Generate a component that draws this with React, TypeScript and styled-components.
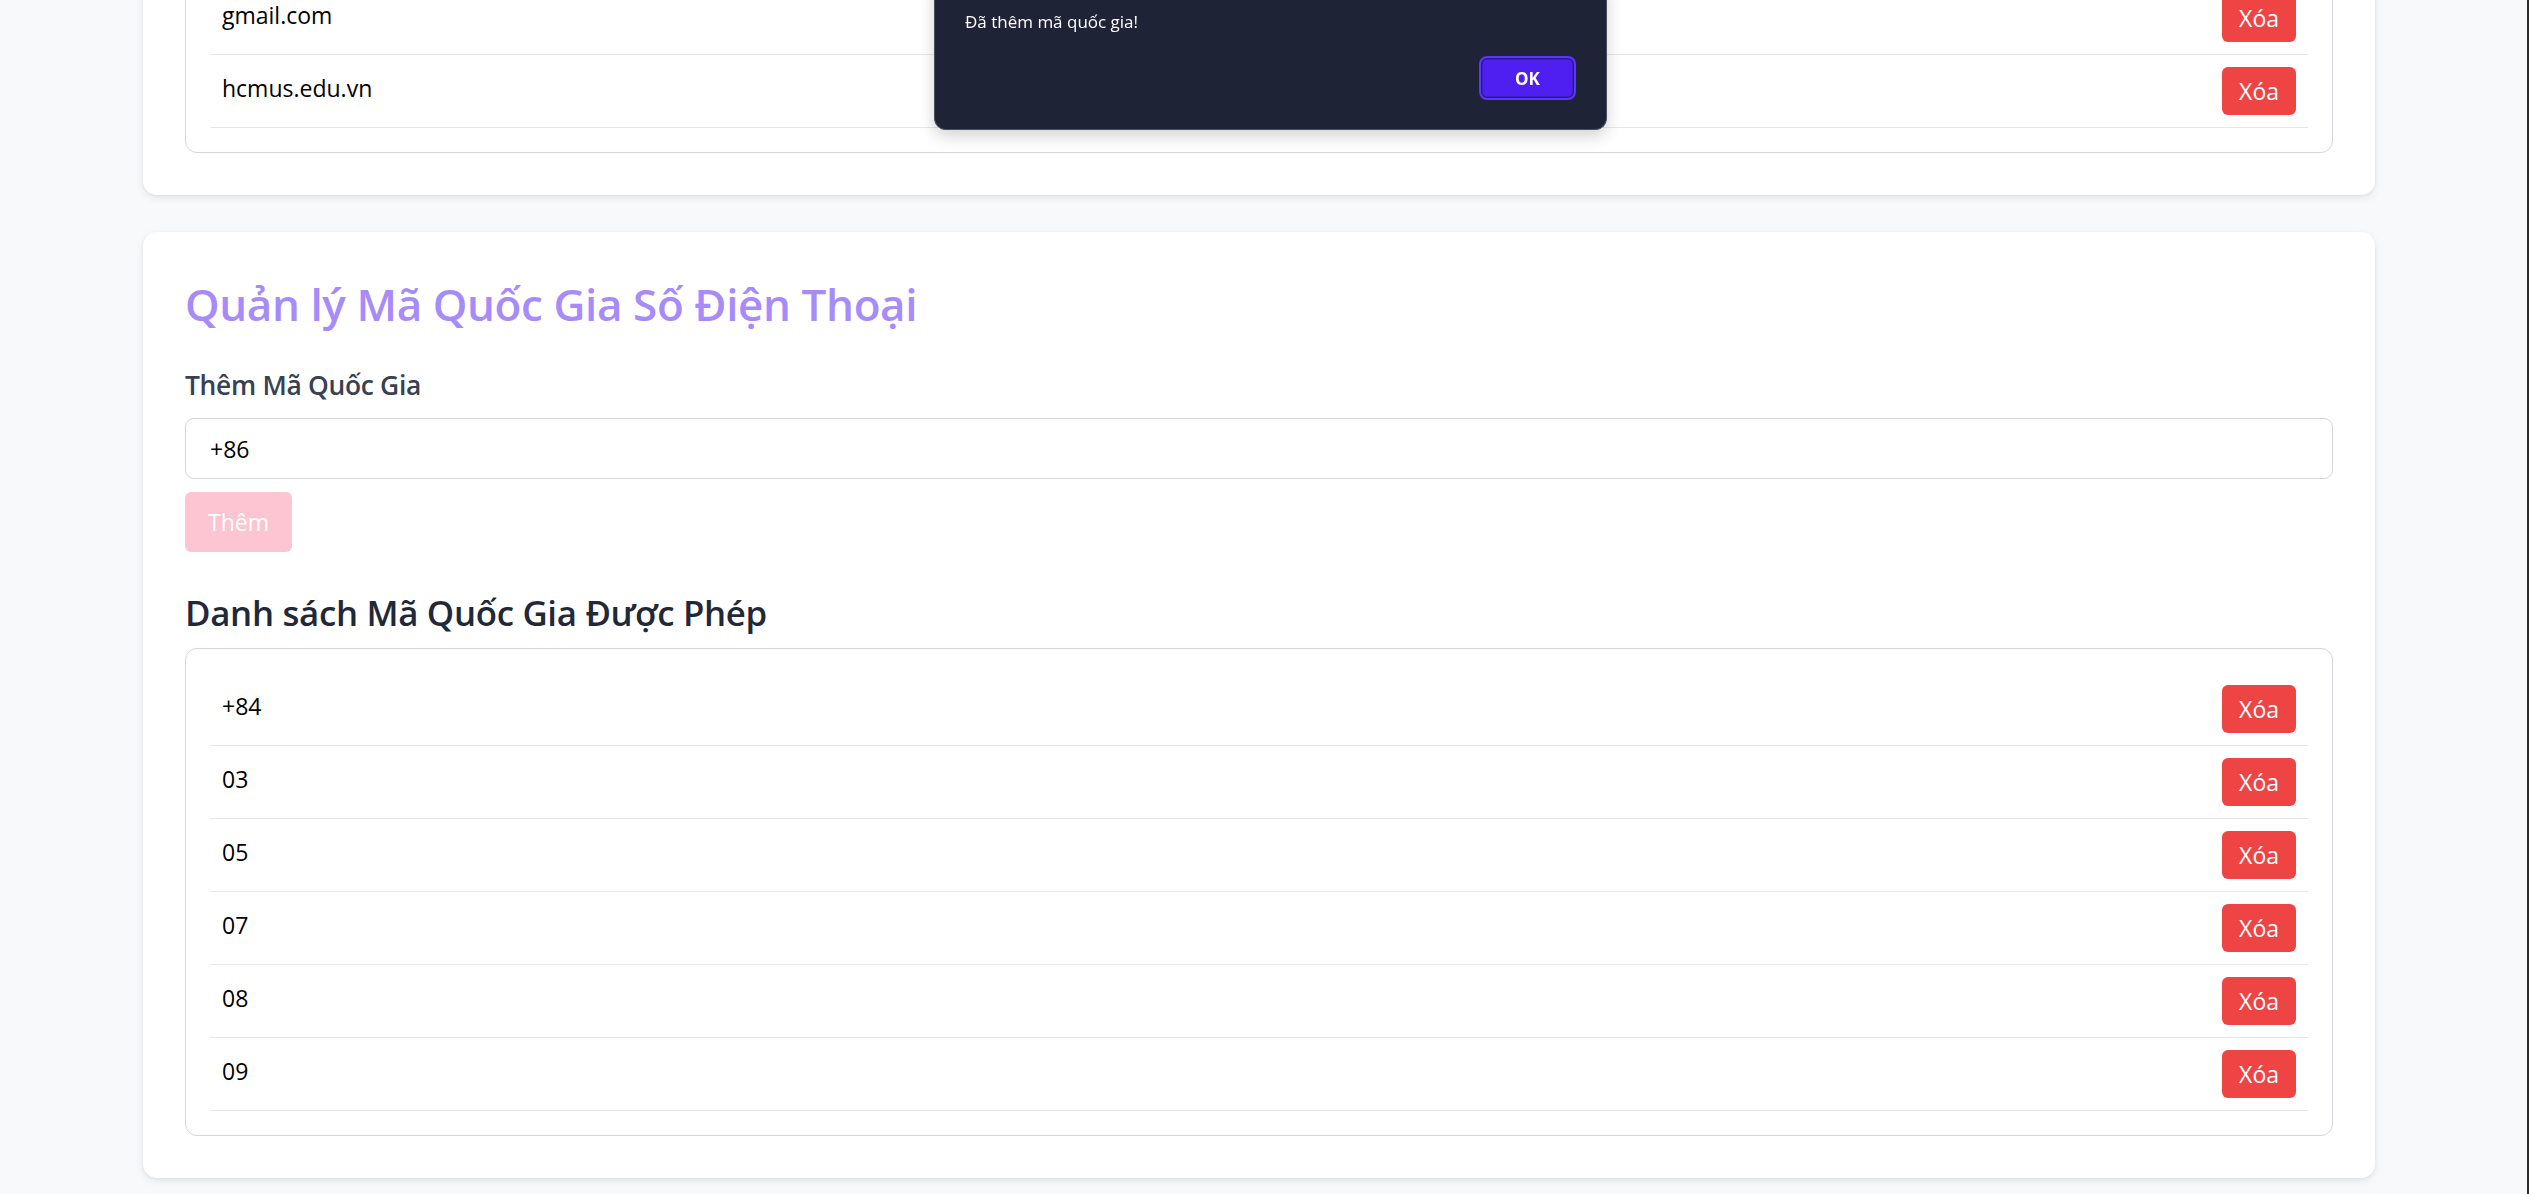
import React from "react";
import styled, { createGlobalStyle } from "styled-components";

const GlobalStyle = createGlobalStyle`
  html, body {
    margin: 0;
    padding: 0;
    background: #f8f9fb;
    font-family: "Open Sans", "Noto Sans", Arial, sans-serif;
    color: #111827;
  }
  body::after {
    content: "";
    position: fixed;
    top: 0;
    right: 0;
    width: 2px;
    height: 100vh;
    background: #2a2c33;
  }
  * { box-sizing: border-box; }
`;

const Page = styled.main`
  display: flex;
  flex-direction: column;
  gap: 37px;
  width: 2232px;
  margin: -85px 0 0 143px;
  padding-bottom: 40px;
`;

const Card = styled.section`
  background: #ffffff;
  border-radius: 14px;
  box-shadow: 0 3px 8px rgba(15, 23, 42, 0.08), 0 1px 3px rgba(15, 23, 42, 0.06);
  padding: 42px;
  display: flex;
  flex-direction: column;
`;

const Title = styled.h2`
  margin: 3px 0 33px;
  font-size: 44px;
  line-height: 54px;
  font-weight: 600;
  color: #a78bfa;
  letter-spacing: -0.4px;
`;

const Label = styled.label`
  display: block;
  margin: 0 0 12px;
  font-size: 26.4px;
  line-height: 42px;
  font-weight: 600;
  color: #374151;
  letter-spacing: -0.3px;
`;

const Input = styled.input`
  display: block;
  width: 100%;
  height: 61px;
  padding: 0 24px;
  font-family: inherit;
  font-size: 23px;
  color: #000;
  border: 1.5px solid #d1d5db;
  border-radius: 9px;
  background: #fff;
  outline: none;
`;

const AddButton = styled.button`
  align-self: flex-start;
  margin-top: 13px;
  height: 60px;
  padding: 0 23px;
  border: none;
  border-radius: 6px;
  background: #fdc4d1;
  color: #ffffff;
  font-family: inherit;
  font-size: 23px;
  line-height: 36px;
  cursor: not-allowed;
`;

const SubTitle = styled.h3`
  margin: 37px 0 11px;
  font-size: 34.8px;
  line-height: 48px;
  font-weight: 600;
  color: #1f2937;
  letter-spacing: -0.3px;
`;

const ListBox = styled.ul`
  list-style: none;
  margin: 0;
  padding: 24px;
  border: 1.5px solid #d4d6dd;
  border-radius: 12px;
`;

const Row = styled.li`
  display: flex;
  align-items: center;
  justify-content: space-between;
  height: 73px;
  padding: 0 12px;
  border-bottom: 1.5px solid #e5e7eb;
`;

const RowText = styled.span`
  font-size: 23px;
  line-height: 36px;
  color: #000;
  padding-bottom: 6px;
`;

const DeleteButton = styled.button`
  height: 48px;
  padding: 0 17px;
  border: none;
  border-radius: 6px;
  background: #ef4444;
  color: #ffffff;
  font-family: inherit;
  font-size: 23px;
  line-height: 36px;
  cursor: pointer;
`;

const Dialog = styled.div`
  position: fixed;
  top: -22px;
  left: 934px;
  width: 673px;
  padding: 30px 30px 29px;
  background: #1f2336;
  border: 1.5px solid #4a4f5e;
  border-top: none;
  border-radius: 12px;
  box-shadow: 0 6px 16px rgba(0, 0, 0, 0.18);
  display: flex;
  flex-direction: column;
`;

const DialogText = styled.p`
  margin: 0 0 20px;
  font-size: 17px;
  line-height: 28px;
  color: #ffffff;
`;

const DialogActions = styled.div`
  display: flex;
  justify-content: flex-end;
`;

const OkButton = styled.button`
  width: 97px;
  height: 44px;
  border: 2px solid #5a34ff;
  border-radius: 8px;
  background: #4f1ff2;
  box-shadow: inset 0 0 0 1.5px #2a1a8a;
  color: #ffffff;
  font-family: inherit;
  font-size: 17px;
  font-weight: 700;
  cursor: pointer;
`;

const domains = ["gmail.com", "hcmus.edu.vn"];
const codes = ["+84", "03", "05", "07", "08", "09"];

function ItemList({ items }: { items: string[] }) {
  return (
    <ListBox>
      {items.map((item) => (
        <Row key={item}>
          <RowText>{item}</RowText>
          <DeleteButton>Xóa</DeleteButton>
        </Row>
      ))}
    </ListBox>
  );
}

export default function App() {
  return (
    <>
      <GlobalStyle />
      <Page>
        <Card>
          <ItemList items={domains} />
        </Card>
        <Card>
          <Title>Quản lý Mã Quốc Gia Số Điện Thoại</Title>
          <Label htmlFor="country-code">Thêm Mã Quốc Gia</Label>
          <Input id="country-code" defaultValue="+86" />
          <AddButton disabled>Thêm</AddButton>
          <SubTitle>Danh sách Mã Quốc Gia Được Phép</SubTitle>
          <ItemList items={codes} />
        </Card>
      </Page>
      <Dialog role="dialog">
        <DialogText>Đã thêm mã quốc gia!</DialogText>
        <DialogActions>
          <OkButton>OK</OkButton>
        </DialogActions>
      </Dialog>
    </>
  );
}
